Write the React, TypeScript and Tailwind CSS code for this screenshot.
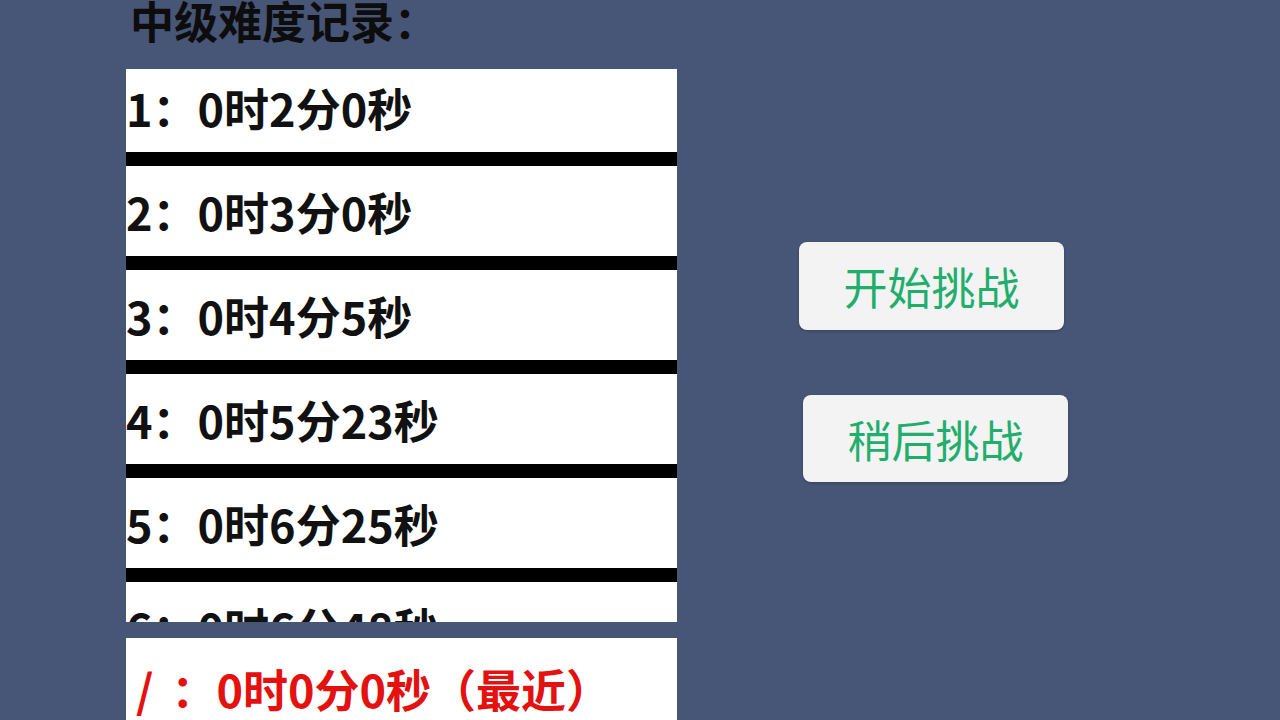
const records = [
  "1：0时2分0秒",
  "2：0时3分0秒",
  "3：0时4分5秒",
  "4：0时5分23秒",
  "5：0时6分25秒",
  "6：0时6分48秒",
];

const cjk = "font-['Noto_Sans_CJK_SC','Noto_Sans',sans-serif]";

export default function App() {
  return (
    <div className={`flex h-[720px] w-[1280px] overflow-hidden bg-[#475577] pl-[126px] ${cjk}`}>
      <div className="flex w-[551px] shrink-0 flex-col">
        <h1 className="h-[69px] shrink-0 pl-[4px] text-[44px] font-bold leading-[40px] text-[#0d0d0d]">
          中级难度记录：
        </h1>

        <div className="h-[553px] shrink-0 overflow-hidden">
          <div className="-mt-[7px]">
            {records.map((r) => (
              <div
                key={r}
                className="flex h-[104px] items-center border-b-[14px] border-black bg-white text-[45px] font-bold leading-none text-[#111]"
              >
                {r}
              </div>
            ))}
          </div>
        </div>

        <div className="mt-[16px] flex h-[100px] shrink-0 items-center bg-white pl-[10px] text-[45px] font-bold leading-none text-[#e3110f]">
          <span className="mr-[18px]">/</span>
          <span>：0时0分0秒（最近）</span>
        </div>
      </div>

      <div className="ml-[122px] flex flex-col pt-[242px]">
        <button className="flex h-[88px] w-[265px] items-center justify-center rounded-[8px] bg-[#f3f3f3] text-[44px] leading-none text-[#1fae6c] shadow-[0_1px_3px_rgba(0,0,0,0.25)]">
          开始挑战
        </button>
        <button className="ml-[4px] mt-[65px] flex h-[87px] w-[265px] items-center justify-center rounded-[8px] bg-[#f3f3f3] text-[44px] leading-none text-[#1fae6c] shadow-[0_1px_3px_rgba(0,0,0,0.25)]">
          稍后挑战
        </button>
      </div>
    </div>
  );
}
